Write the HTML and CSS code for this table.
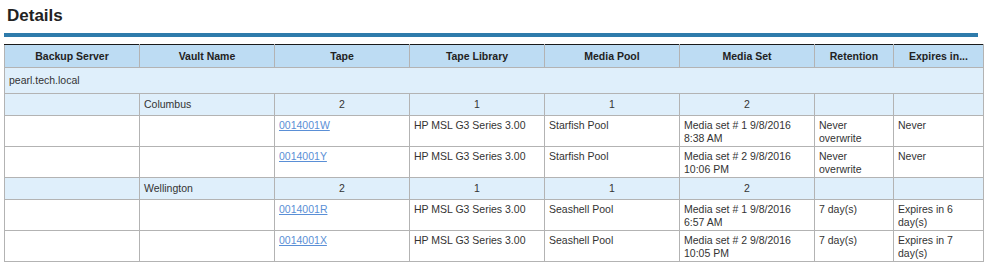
FILE: index.html
```html
<!DOCTYPE html>
<html>
<head>
<meta charset="utf-8">
<link rel="stylesheet" href="styles.css">
</head>
<body>
<div class="page">
  <h1 class="title">Details</h1>
  <div class="rule"></div>
  <table class="grid">
    <colgroup>
      <col class="c135"><col class="c135"><col class="c135"><col class="c135"><col class="c135"><col class="c135"><col class="c79"><col class="c90">
    </colgroup>
    <thead>
      <tr class="head">
        <th>Backup Server</th><th>Vault Name</th><th>Tape</th><th>Tape Library</th><th>Media Pool</th><th>Media Set</th><th>Retention</th><th>Expires in...</th>
      </tr>
    </thead>
    <tbody>
      <tr class="server"><td colspan="8">pearl.tech.local</td></tr>
      <tr class="group">
        <td></td><td>Columbus</td><td class="ctr">2</td><td class="ctr">1</td><td class="ctr">1</td><td class="ctr">2</td><td></td><td></td>
      </tr>
      <tr class="data">
        <td></td><td></td><td><a href="#">0014001W</a></td><td>HP MSL G3 Series 3.00</td><td>Starfish Pool</td><td>Media set # 1 9/8/2016 8:38 AM</td><td>Never overwrite</td><td>Never</td>
      </tr>
      <tr class="data">
        <td></td><td></td><td><a href="#">0014001Y</a></td><td>HP MSL G3 Series 3.00</td><td>Starfish Pool</td><td>Media set # 2 9/8/2016 10:06 PM</td><td>Never overwrite</td><td>Never</td>
      </tr>
      <tr class="group">
        <td></td><td>Wellington</td><td class="ctr">2</td><td class="ctr">1</td><td class="ctr">1</td><td class="ctr">2</td><td></td><td></td>
      </tr>
      <tr class="data">
        <td></td><td></td><td><a href="#">0014001R</a></td><td>HP MSL G3 Series 3.00</td><td>Seashell Pool</td><td>Media set # 1 9/8/2016 6:57 AM</td><td>7 day(s)</td><td>Expires in 6 day(s)</td>
      </tr>
      <tr class="data">
        <td></td><td></td><td><a href="#">0014001X</a></td><td>HP MSL G3 Series 3.00</td><td>Seashell Pool</td><td>Media set # 2 9/8/2016 10:05 PM</td><td>7 day(s)</td><td>Expires in 7 day(s)</td>
      </tr>
    </tbody>
  </table>
</div>
</body>
</html>
```
FILE: styles.css
```css
html, body {
  margin: 0;
  padding: 0;
  background: #ffffff;
}
.page {
  padding: 0 8px 0 4px;
  font-family: "Liberation Sans", Arial, sans-serif;
  color: #333333;
}
.title {
  margin: 0;
  padding: 6px 0 0 3px;
  height: 28px;
  box-sizing: border-box;
  font-size: 17px;
  font-weight: bold;
  line-height: 20px;
  color: #222222;
}
.rule {
  margin-top: 5px;
  height: 4px;
  width: 974px;
  background: #2e7bab;
}
.grid {
  margin-top: 7px;
  width: 980px;
  table-layout: fixed;
  border-collapse: collapse;
  border: 1px solid #1a1a1a;
  font-size: 10.5px;
  line-height: 13px;
}
.c135 { width: 135px; }
.c79 { width: 79px; }
.c90 { width: 90px; }
.grid th, .grid td {
  border: 1px solid #b3b3b3;
  padding: 0 4px;
  text-align: left;
  overflow: hidden;
}
.grid th {
  background: #bddcf3;
  height: 22px;
  text-align: center;
  vertical-align: middle;
  font-weight: bold;
  color: #222222;
  border-top-color: #1a1a1a;
}
.server td {
  background: #dfeffb;
  height: 24px;
  vertical-align: middle;
  padding-bottom: 1px;
}
.group td {
  background: #dfeffb;
  height: 21px;
  vertical-align: middle;
}
.grid .ctr { text-align: center; }
.data td {
  height: 31px;
  vertical-align: top;
  padding-top: 3px;
  padding-bottom: 0;
  box-sizing: border-box;
}
.grid a {
  color: #5a8fd6;
  text-decoration: underline;
}
```
